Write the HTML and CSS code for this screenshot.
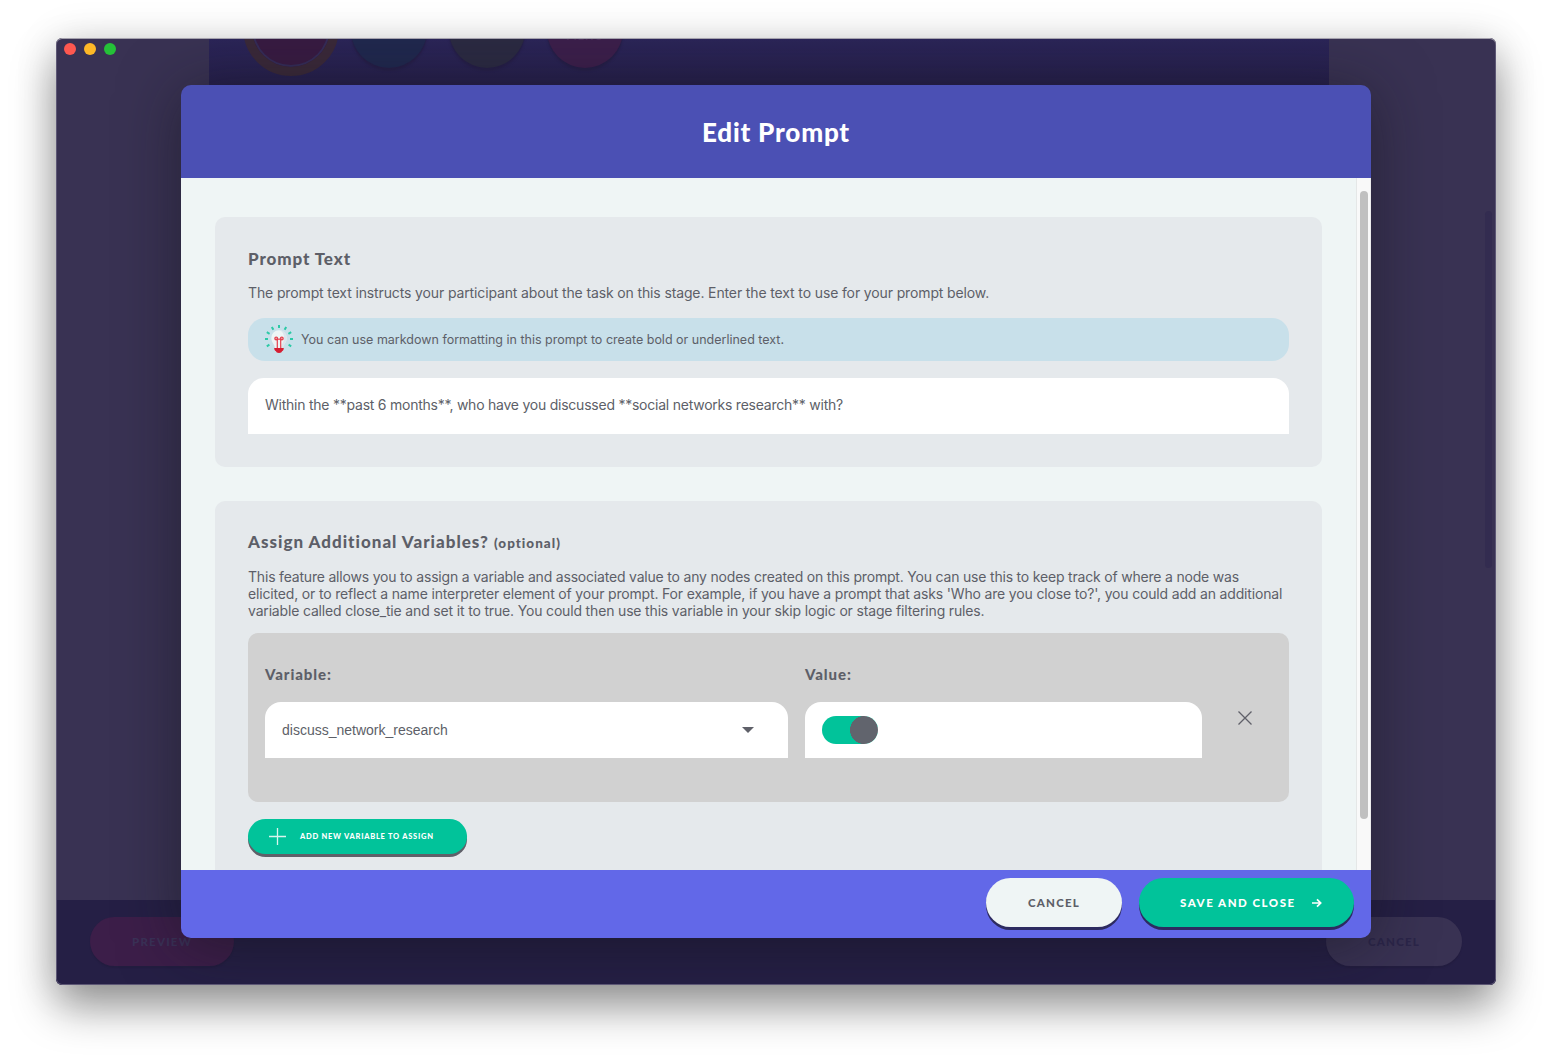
FILE: index.html
```html
<!DOCTYPE html>
<html lang="en">
<head>
<meta charset="utf-8">
<title>Edit Prompt</title>
<link rel="stylesheet" href="styles.css">
</head>
<body>
<div class="window">
  <div class="lights"><i class="light red"></i><i class="light amber"></i><i class="light green"></i></div>
  <div class="timeline">
    <i class="node current"></i><i class="node blue"></i><i class="node olive"></i><i class="node pink"><span>MENU</span></i>
  </div>
  <i class="page-thumb"></i>
  <div class="page-footer">
    <div class="ghost preview"><span>PREVIEW</span></div>
    <div class="ghost"><span>CANCEL</span></div>
  </div>
  <div class="dialog">
    <header class="dialog-header"><h1>Edit Prompt</h1></header>
    <div class="dialog-body">
      <main class="content">
        <section class="card first">
          <h2>Prompt Text</h2>
          <p class="intro">The prompt text instructs your participant about the task on this stage. Enter the text to use for your prompt below.</p>
          <div class="tip">
            <svg class="bulb" viewBox="0 0 28 28" width="28" height="28">
              <g stroke="#2cc9a6" stroke-width="2"><path d="M14 0v3M6.8 2l1.6 2.8M21.2 2l-1.6 2.8M1.8 7.2l2.8 1.6M26.2 7.2l-2.8 1.6M0 14h3M25 14h3M1.8 21.3l2.6-1.6M26.2 21.3l-2.6-1.6"/></g>
              <path d="M14 5.2a7.7 7.7 0 0 0-7.7 7.8c0 4.6 3.5 6.4 3.7 10h8c.2-3.6 3.7-5.4 3.7-10A7.7 7.7 0 0 0 14 5.2z" fill="#eef5f6"/>
              <path d="M15 5.3c5 .7 6.7 4 6.7 7.7 0 4.6-3.5 6.4-3.7 10h-2c.4-4 3-6 3-10 0-3-1-6-4-7.700z" fill="#dbe5ed"/>
              <g fill="none" stroke="#e4414f" stroke-width="1.2"><path d="M12.300 23v-9.200M15.700 23v-9.200"/><path d="M10 14.200h8"/><circle cx="11.200" cy="13.500" r="1.400"/><circle cx="16.800" cy="13.500" r="1.400"/></g>
              <path d="M9.200 23h9.600c0 1.600-.5 2.500-1.800 3.300-.4 1.100-1 1.700-3 1.700s-2.600-.6-3-1.700c-1.300-.8-1.800-1.700-1.800-3.300z" fill="#d51e32"/>
            </svg>
            <span>You can use markdown formatting in this prompt to create bold or underlined text.</span>
          </div>
          <div class="field prompt">Within the **past 6 months**, who have you discussed **social networks research** with?</div>
        </section>
        <section class="card second">
          <h2 class="assign">Assign Additional Variables? <small>(optional)</small></h2>
          <p class="desc"><span class="lead">This feature allows you to assign a variable and associated value to any nodes created on this prompt. You can use this to keep track of where a node was</span><br>elicited, or to reflect a name interpreter element of your prompt. For example, if you have a prompt that asks 'Who are you close to?', you could add an additional<br>variable called close_tie and set it to true. You could then use this variable in your skip logic or stage filtering rules.</p>
          <div class="assignment">
            <div class="variable">
              <h3>Variable:</h3>
              <div class="field select"><span>discuss_network_research</span><i class="caret"></i></div>
            </div>
            <div class="value">
              <h3>Value:</h3>
              <div class="field"><i class="toggle"></i></div>
            </div>
            <svg class="remove" viewBox="0 0 14 14" width="14" height="14"><path d="M.5.5l13 13M13.500.5l-13 13" stroke="#5f6069" stroke-width="1.300"/></svg>
          </div>
          <div class="add">
            <svg viewBox="0 0 17 17" width="17" height="17"><path d="M8.500 0v17M0 8.500h17" stroke="#d9f5ee" stroke-width="1.300"/></svg>
            <span>ADD NEW VARIABLE TO ASSIGN</span>
          </div>
        </section>
      </main>
      <div class="scrollbar"><i class="thumb"></i></div>
    </div>
    <footer class="dialog-footer">
      <div class="btn cancel">CANCEL</div>
      <div class="btn save"><span>SAVE AND CLOSE</span>
        <svg viewBox="0 0 10 10" width="10" height="10"><path d="M0 5h8.500M5 1.300L8.700 5 5 8.700" fill="none" stroke="#fff" stroke-width="1.700"/></svg>
      </div>
    </footer>
  </div>
</div>
</body>
</html>
```
FILE: styles.css
```css
* { box-sizing: border-box; }
html, body { height: 100%; }
body { margin: 0; padding: 38px 56px; background: #fff; font-family: Inter, sans-serif; color: #5d5f68; overflow: hidden; }
i { display: block; font-style: normal; }
h1, h2, h3, p { margin: 0; }
h1, h2, h3, .btn, .add, .ghost { font-family: Lato, sans-serif; font-weight: 900; }
h1, h2, h3, p, .field, .tip, .btn, .add { white-space: nowrap; }
svg { display: block; flex: none; }

.window { position: relative; width: 1440px; height: 947px; border-radius: 6px; background: #393253; display: flex; flex-direction: column; overflow: hidden; }
body::before { content: ""; position: absolute; left: 56px; top: 38px; width: 1440px; height: 947px; border-radius: 6px; box-shadow: 0 22px 44px rgba(0,0,0,.4), 0 2px 44px rgba(0,0,0,.12); }
.window::after { content: ""; position: absolute; inset: 0; border-radius: 6px; box-shadow: inset 0 1px 0 #a5a2ad, inset 0 0 0 1px #5d5775; }
.lights { position: absolute; z-index: 2; left: 8px; top: 5px; display: flex; gap: 8px; }
.light { width: 12px; height: 12px; border-radius: 50%; }
.red { background: #fe5850; }
.amber { background: #fdb827; }
.green { background: #25c138; }

.timeline { position: relative; width: 1120px; height: 140px; margin-left: 153px; background: linear-gradient(#2b2558 0, #251e49 60px); overflow: hidden; flex: none; }
.node { position: absolute; width: 76px; height: 76px; top: -46px; border-radius: 50%; box-shadow: 0 3px 2px #261f48; }
.node.current { left: 34px; top: -58px; width: 96px; height: 96px; background: #381b42; border: 9px solid #3a2939; box-shadow: inset 0 0 0 2px #352c57; }
.blue { left: 142px; background: #20284e; }
.olive { left: 240px; background: #2b2a42; }
.pink { left: 338px; background: #3c1f4b; text-align: center; font: 900 11px/12px Lato, sans-serif; letter-spacing: 1px; color: #4a2e58; padding-top: 38px; }
.page-thumb { position: absolute; right: 4px; top: 173px; width: 7px; height: 357px; border-radius: 4px; background: #332c50; }
.page-footer { margin-top: auto; height: 85px; padding: 0 34px; background: #251f45; display: flex; align-items: center; justify-content: space-between; }
.ghost { width: 136px; height: 49px; margin-bottom: 2px; border-radius: 25px; background: #393253; color: #2b2549; display: flex; align-items: center; justify-content: center; font-size: 11.500px; letter-spacing: 1.200px; box-shadow: 0 2px 1px #231d40; }
.preview { width: 144px; background: #3c1e49; color: #3a3157; }

.dialog { position: absolute; left: 125px; top: 47px; width: 1190px; height: 853px; border-radius: 10px; overflow: hidden; display: flex; flex-direction: column; }
.page-footer::after { content: ""; position: absolute; left: 125px; top: 47px; width: 1190px; height: 853px; border-radius: 10px; box-shadow: 0 6px 60px rgba(18,18,24,.5); }
.dialog-header { height: 93px; background: #4b50b4; display: flex; align-items: center; justify-content: center; color: #fff; flex: none; }
.dialog-header h1 { font-size: 26px; letter-spacing: .8px; }
.dialog-body { height: 692px; background: #eff5f5; display: flex; overflow: hidden; }
.content { flex: 1; min-width: 0; padding: 39px 34px 0; display: flex; flex-direction: column; gap: 34px; }
.card { border-radius: 10px; background: #e5e9ec; padding: 0 33px; flex: none; }
.first { height: 250px; }
.second { height: 400px; }
h2 { font-size: 17px; line-height: 20px; letter-spacing: .9px; padding-top: 32px; }
small { font-size: 13.500px; }
.assign { padding-top: 31px; letter-spacing: 1px; }
.intro { font-size: 14px; line-height: 17px; margin-top: 15px; letter-spacing: -.13px; }
.tip { height: 43px; margin-top: 17px; padding-left: 17px; border-radius: 17px; background: #c8e0ea; display: flex; align-items: center; gap: 8px; font-size: 12.500px; }
.bulb { position: relative; top: -1px; }
.field { height: 56px; border-radius: 16px 16px 0 0; background: #fff; padding: 0 17px; display: flex; align-items: center; font-size: 14px; }
.prompt { margin-top: 17px; padding-bottom: 3px; letter-spacing: -.237px; }
.desc { font-size: 14px; line-height: 17px; margin-top: 15px; letter-spacing: -.167px; }
.lead { letter-spacing: -.193px; }
.assignment { height: 169px; margin-top: 14px; padding: 0 17px; border-radius: 10px; background: #d1d1d1; display: flex; gap: 17px; }
.variable { width: 523px; flex: none; }
.value { width: 397px; flex: none; }
h3 { font-size: 15px; line-height: 18px; letter-spacing: .9px; padding: 32px 0 19px; }
.select { justify-content: space-between; font-family: "Liberation Sans", sans-serif; padding-right: 34px; }
.caret { width: 12px; height: 6px; background: #5f6069; clip-path: polygon(0 0, 100% 0, 50% 100%); }
.toggle { width: 56px; height: 28px; border-radius: 14px; background: radial-gradient(circle at 42px 14px, #61646d 13.700px, #01c39a 14.200px); }
.remove { margin: 78px 0 0 19px; }
.add { width: 219px; height: 35px; margin-top: 17px; padding-left: 21px; border-radius: 18px; background: #01c39a; color: #fff; box-shadow: 0 3px 0 #5f6069; display: flex; align-items: center; gap: 14px; font-size: 7.500px; letter-spacing: .75px; }
.scrollbar { width: 15px; flex: none; background: #f9f9f9; border-left: 1px solid #e5e7e7; border-right: 1px solid #ececec; padding: 13px 0 0 3px; }
.thumb { width: 8px; height: 628px; border-radius: 4px; background: #c0c0c0; }
.dialog-footer { height: 68px; background: #6268e8; padding: 8px 17px; display: flex; justify-content: flex-end; gap: 17px; }
.btn { height: 49px; border-radius: 25px; display: flex; align-items: center; font-size: 11.500px; letter-spacing: 1.500px; box-shadow: 0 3px 0 #2d2b60; }
.cancel { width: 136px; background: #eff5f5; color: #5d5f68; padding-left: 42px; letter-spacing: 1.200px; }
.save { width: 215px; background: #01c39a; color: #fff; padding-left: 41px; }
.save svg { margin-left: auto; margin-right: 32px; }
```
